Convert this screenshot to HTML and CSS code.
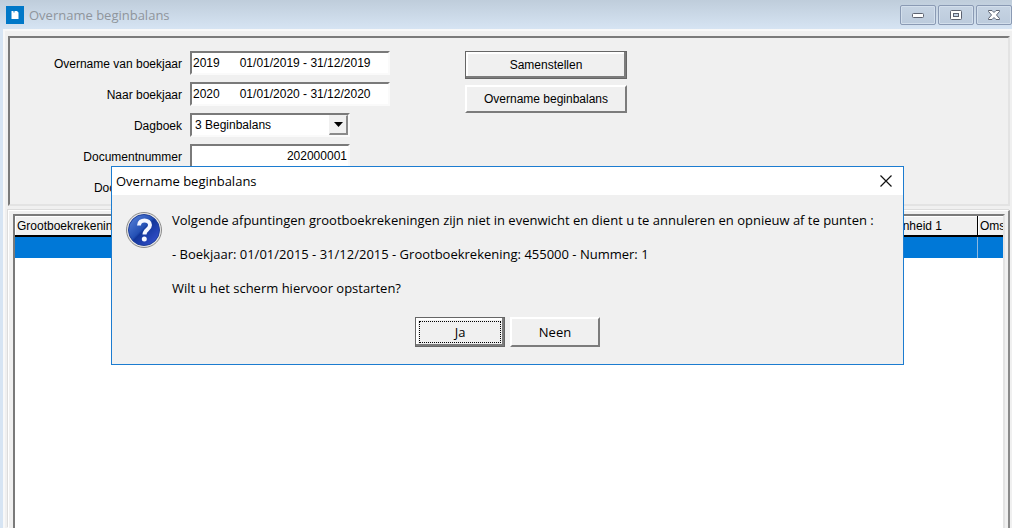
FILE: index.html
```html
<!DOCTYPE html>
<html lang="nl">
<head>
    <meta charset="utf-8">
    <title>Overname beginbalans</title>
    <link rel="stylesheet" href="styles.css">
</head>
<body>
    <div class="window">
        <header class="titlebar">
            <svg class="app-icon" width="18" height="18" viewBox="0 0 18 18">
                <rect width="18" height="18" fill="#0078c8"/>
                <path d="M5.500 5h2v1.500h1V5H11l1.500 1.500V13h-7z" fill="#fff"/>
            </svg>
            <h1>Overname beginbalans</h1>
            <div class="window-buttons">
                <button type="button" aria-label="Minimaliseren">
                    <svg width="14" height="12" viewBox="0 0 14 12"><rect x="1.500" y="4.500" width="11" height="4" rx="1" fill="#fff" stroke="#5c6270"/></svg>
                </button>
                <button type="button" aria-label="Maximaliseren">
                    <svg width="14" height="12" viewBox="0 0 14 12"><rect x="1.500" y="1.500" width="11" height="9" rx="1" fill="#fff" stroke="#5c6270"/><rect x="4.500" y="4.500" width="5" height="3" fill="#c3d3e5" stroke="#5c6270"/></svg>
                </button>
                <button type="button" aria-label="Sluiten">
                    <svg width="14" height="12" viewBox="0 0 14 12"><path d="M1.500 1.500h3.500l2 2 2-2h3.500v1L9.500 6l3 3.500v1H9l-2-2-2 2H1.500v-1l3-3.500-3-3.500z" fill="#fff" stroke="#5c6270"/></svg>
                </button>
            </div>
        </header>

        <main class="client">
            <form class="panel" id="overnameForm">
                <div class="fields">
                    <label for="vanJaar">Overname van boekjaar</label>
                    <input type="text" id="vanJaar" value="2019      01/01/2019 - 31/12/2019">
                    <label for="naarJaar">Naar boekjaar</label>
                    <input type="text" id="naarJaar" value="2020      01/01/2020 - 31/12/2020">
                    <label for="dagboek">Dagboek</label>
                    <div class="combo">
                        <select id="dagboek">
                            <option>3 Beginbalans</option>
                        </select>
                        <span class="combo-arrow"><svg width="9" height="5" viewBox="0 0 9 5"><path d="M0 0h9L4.500 5z"/></svg></span>
                    </div>
                    <label for="docNummer">Documentnummer</label>
                    <input type="text" id="docNummer" class="short number" value="202000001">
                    <label for="docDatum">Documentdatum</label>
                    <input type="text" id="docDatum" class="short">
                </div>
                <div class="actions">
                    <button type="button" class="btn default">Samenstellen</button>
                    <button type="button" class="btn">Overname beginbalans</button>
                </div>
            </form>

            <section class="grid-panel">
                <div class="grid-box">
                    <table>
                        <thead>
                            <tr>
                                <th>Grootboekrekening</th>
                                <th class="unit">Eenheid 1</th>
                                <th class="desc">Oms</th>
                            </tr>
                        </thead>
                        <tbody>
                            <tr><td></td><td></td><td></td></tr>
                        </tbody>
                    </table>
                </div>
            </section>
        </main>
    </div>

    <div class="dialog" role="dialog" aria-labelledby="dialogTitle">
        <div class="dialog-title">
            <h2 id="dialogTitle">Overname beginbalans</h2>
            <button type="button" class="close" aria-label="Sluiten">
                <svg width="12" height="12" viewBox="0 0 12 12"><path d="M.500.500l11 11M11.500.500l-11 11" stroke="#111" stroke-width="1.200"/></svg>
            </button>
        </div>
        <div class="dialog-body">
            <svg class="question" width="38" height="38" viewBox="0 0 38 38">
                <defs>
                    <linearGradient id="ball" x1="0" y1="0" x2="1" y2="1">
                        <stop offset="0" stop-color="#5c86dc"/>
                        <stop offset=".45" stop-color="#2450b4"/>
                        <stop offset=".5" stop-color="#12369a"/>
                        <stop offset="1" stop-color="#3c56d8"/>
                    </linearGradient>
                </defs>
                <circle cx="19" cy="19" r="17.500" fill="#e4e4e4" stroke="#8c8c8c"/>
                <circle cx="19" cy="19" r="15.500" fill="url(#ball)" stroke="#20409c"/>
                <path d="M14 14.500c0-7 11-6.500 11-.500 0 4.500-5.500 4.500-5.500 9.500" fill="none" stroke="#f4f6ff" stroke-width="4"/>
                <circle cx="19.300" cy="28" r="2.500" fill="#f4f6ff"/>
            </svg>
            <div class="message">
                <p>Volgende afpuntingen grootboekrekeningen zijn niet in evenwicht en dient u te annuleren en opnieuw af te punten :</p>
                <p>- Boekjaar: 01/01/2015 - 31/12/2015 - Grootboekrekening: 455000 - Nummer: 1</p>
                <p>Wilt u het scherm hiervoor opstarten?</p>
            </div>
        </div>
        <div class="dialog-buttons">
            <button type="button" class="btn default focused">Ja</button>
            <button type="button" class="btn">Neen</button>
        </div>
    </div>
</body>
</html>
```
FILE: styles.css
```css
* {
    box-sizing: border-box;
}

body {
    margin: 0;
    font-family: "Liberation Sans", Arial, sans-serif;
    font-size: 12px;
    color: #000;
    background-color: #f0f0f0;
}

h1, h2, p {
    margin: 0;
    font-weight: normal;
}

.window {
    display: flex;
    flex-direction: column;
    height: 100vh;
    overflow: hidden;
    padding-left: 3px;
    background-color: #d6e4f3;
}

/* title bar */
.titlebar {
    display: flex;
    flex: none;
    align-items: center;
    gap: 5px;
    height: 29px;
    margin-left: -3px;
    padding: 1px 0 0 6px;
    background: linear-gradient(#bfcddb, #d6e4f3);
}

.titlebar h1 {
    flex: 1;
    font-family: "Open Sans", "Noto Sans", sans-serif;
    font-size: 13px;
    line-height: 18px;
    color: #8f959c;
}

.window-buttons {
    display: flex;
    gap: 2px;
}

.window-buttons button {
    display: flex;
    align-items: center;
    justify-content: center;
    width: 36px;
    height: 20px;
    padding: 0;
    border: 1px solid #8a9ab4;
    border-radius: 2px;
    background: linear-gradient(#c6d4e3, #bccbdc);
    box-shadow: inset 0 0 0 1px #d3dfec;
}

.client {
    display: flex;
    flex: 1;
    flex-direction: column;
    min-height: 0;
    gap: 4px;
    padding: 5px 2px 0 3px;
    border: 2px solid #f8f8f8;
    border-right: 0;
    border-bottom: 0;
    background-color: #f0f0f0;
}

/* top panel */
.panel {
    display: flex;
    flex: none;
    gap: 75px;
    height: 170px;
    padding: 13px 0 0 12px;
    border: 2px solid #e3e3e3;
    border-top-color: #7a7a7a;
    border-left-color: #7a7a7a;
}

.fields {
    display: grid;
    grid-template-columns: 160px 200px;
    grid-auto-rows: 24px;
    column-gap: 8px;
    row-gap: 7px;
    height: 148px;
}

.fields label {
    text-align: right;
    line-height: 26px;
}

.fields input, .combo {
    width: 200px;
    height: 24px;
    border: 2px solid #fafafa;
    border-top-color: #7a7a7a;
    border-left-color: #7a7a7a;
    background-color: #fff;
}

.fields input {
    padding: 0 1px;
    font: inherit;
}

.fields .short, .combo {
    width: 160px;
}

.fields .number {
    text-align: right;
}

.combo {
    position: relative;
}

.combo select {
    width: 100%;
    height: 20px;
    padding: 0 3px;
    border: 0;
    appearance: none;
    background: none;
    font: inherit;
}

.combo-arrow {
    position: absolute;
    top: 0;
    right: 0;
    display: flex;
    align-items: center;
    justify-content: center;
    width: 19px;
    height: 20px;
    border: 1px solid #f0f0f0;
    border-right: 2px solid #8a8a8a;
    border-bottom: 2px solid #8a8a8a;
    background-color: #f0f0f0;
    pointer-events: none;
}

.actions {
    display: flex;
    flex-direction: column;
    gap: 6px;
}

.btn {
    width: 162px;
    height: 28px;
    padding: 0;
    border: 2px solid #fff;
    border-right-color: #7c7c7c;
    border-bottom-color: #7c7c7c;
    background-color: #f0f0f0;
    color: #000;
    font: inherit;
}

.btn.default {
    border: 1px solid #666;
    box-shadow: inset -2px -2px #7c7c7c, inset 2px 2px #fff;
}

/* ledger grid */
.grid-panel {
    display: flex;
    flex: 1;
    min-height: 0;
    padding: 3px 3px 0 4px;
    border: 1px solid #fff;
    border-right: 2px solid #8a8a8a;
    border-bottom: 0;
    box-shadow: -1px -1px #dcdcdc;
}

.grid-box {
    flex: 1;
    overflow: hidden;
    border: 2px solid #e3e3e3;
    border-top-color: #7a7a7a;
    border-left-color: #7a7a7a;
    border-bottom: 0;
    background-color: #fff;
}

table {
    width: 100%;
    table-layout: fixed;
    border-collapse: separate;
    border-spacing: 0;
}

th {
    height: 21px;
    padding: 0 2px;
    overflow: hidden;
    border-right: 1px solid #000;
    border-bottom: 2px solid #000;
    background-color: #f0f0f0;
    box-shadow: inset 1px 1px #fff;
    font-weight: normal;
    text-align: left;
    white-space: nowrap;
}

th.unit {
    width: 92px;
}

th.desc {
    width: 25px;
    padding-right: 0;
    border-right: 0;
}

td {
    height: 21px;
    padding: 0;
    border-right: 1px solid #8cb8e0;
    background-color: #0078d7;
}

td:last-child {
    border-right: 0;
}

/* message box */
.dialog {
    position: fixed;
    top: 166px;
    left: 111px;
    right: 108px;
    border: 1px solid #1c7cd0;
    background-color: #f0f0f0;
    font-family: "Open Sans", "Noto Sans", sans-serif;
    font-size: 13px;
}

.dialog-title {
    display: flex;
    align-items: center;
    justify-content: space-between;
    height: 28px;
    padding: 0 11px 0 4px;
    background-color: #fff;
}

.dialog-title h2 {
    font-size: 13px;
}

.close {
    display: flex;
    padding: 0;
    border: 0;
    background: none;
}

.dialog-body {
    display: flex;
    gap: 9px;
    padding: 16px 13px 0;
}

.question {
    flex: none;
}

.message {
    display: flex;
    flex-direction: column;
    gap: 16px;
    line-height: 18px;
    white-space: nowrap;
}

.dialog-buttons {
    display: flex;
    justify-content: center;
    gap: 5px;
    padding: 20px 0 17px;
}

.dialog-buttons .btn {
    width: 90px;
    height: 30px;
}

.btn.focused {
    outline: 1px dotted #000;
    outline-offset: -5px;
}
```
